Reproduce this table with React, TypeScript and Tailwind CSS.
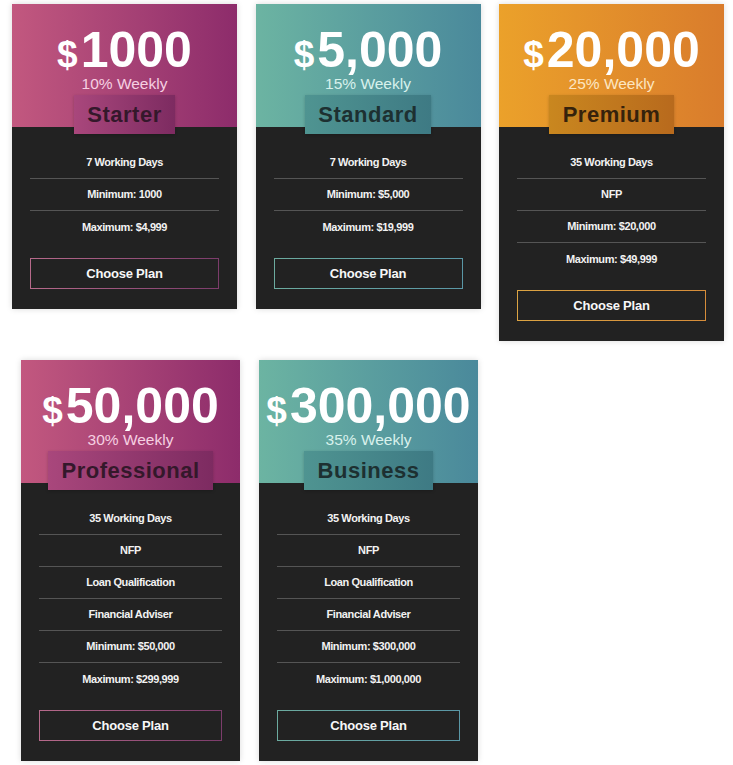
import React from "react";

type Plan = {
  price: string;
  rate: string;
  name: string;
  features: string[];
  theme: "pink" | "teal" | "orange";
};

const themes = {
  pink: {
    header: "bg-gradient-to-r from-[#c2587f] to-[#8d2c6b]",
    label: "bg-gradient-to-r from-[#a9477c] to-[#7d2b61]",
    border: "bg-gradient-to-r from-[#b76a8b] to-[#7c3c6b]",
    rate: "text-[#f6d0e2]",
    ink: "text-[#34182b]",
  },
  teal: {
    header: "bg-gradient-to-r from-[#6cb4a2] to-[#4a899b]",
    label: "bg-gradient-to-r from-[#4f9491] to-[#3e7a84]",
    border: "bg-gradient-to-r from-[#6cab9f] to-[#5a97a6]",
    rate: "text-[#d8f1ec]",
    ink: "text-[#1d3031]",
  },
  orange: {
    header: "bg-gradient-to-r from-[#eba12a] to-[#d97c2c]",
    label: "bg-gradient-to-r from-[#c9871f] to-[#b86a1d]",
    border: "bg-gradient-to-r from-[#dca443] to-[#d68d3a]",
    rate: "text-[#fce6c2]",
    ink: "text-[#35220c]",
  },
};

const topRow: Plan[] = [
  {
    price: "1000",
    rate: "10% Weekly",
    name: "Starter",
    features: ["7 Working Days", "Minimum: 1000", "Maximum: $4,999"],
    theme: "pink",
  },
  {
    price: "5,000",
    rate: "15% Weekly",
    name: "Standard",
    features: ["7 Working Days", "Minimum: $5,000", "Maximum: $19,999"],
    theme: "teal",
  },
  {
    price: "20,000",
    rate: "25% Weekly",
    name: "Premium",
    features: ["35 Working Days", "NFP", "Minimum: $20,000", "Maximum: $49,999"],
    theme: "orange",
  },
];

const bottomRow: Plan[] = [
  {
    price: "50,000",
    rate: "30% Weekly",
    name: "Professional",
    features: [
      "35 Working Days",
      "NFP",
      "Loan Qualification",
      "Financial Adviser",
      "Minimum: $50,000",
      "Maximum: $299,999",
    ],
    theme: "pink",
  },
  {
    price: "300,000",
    rate: "35% Weekly",
    name: "Business",
    features: [
      "35 Working Days",
      "NFP",
      "Loan Qualification",
      "Financial Adviser",
      "Minimum: $300,000",
      "Maximum: $1,000,000",
    ],
    theme: "teal",
  },
];

const PlanCard = ({ plan, width }: { plan: Plan; width: string }) => {
  const t = themes[plan.theme];
  return (
    <div className={`${width} shrink-0 bg-[#222222] shadow-[0_0_6px_rgba(0,0,0,0.15)]`}>
      <div className={`flex h-[123px] flex-col items-center pt-[21px] ${t.header}`}>
        <div className="flex h-[50px] items-baseline font-bold text-white">
          <span className="mr-[3px] text-[37px] leading-[50px]">$</span>
          <span className="text-[50px] leading-[50px]">{plan.price}</span>
        </div>
        <p className={`text-[15.5px] leading-[18px] ${t.rate}`}>{plan.rate}</p>
        <div
          className={`relative z-10 mt-[2px] h-[39px] px-[13.5px] text-[22px] leading-[39px] font-bold tracking-[0.5px] shadow-[0_1px_3px_rgba(0,0,0,0.2)] ${t.label} ${t.ink}`}
        >
          {plan.name}
        </div>
      </div>
      <div className="px-[18px] pt-[20px] pb-[20px]">
        <ul>
          {plan.features.map((f, i) => (
            <li
              key={f}
              className={`flex h-[32px] items-center justify-center text-[11px] font-bold tracking-[-0.4px] text-[#f2f2f2] ${
                i < plan.features.length - 1 ? "border-b border-[#555555]" : ""
              }`}
            >
              {f}
            </li>
          ))}
        </ul>
        <div className={`mt-[15px] p-[1px] ${t.border}`}>
          <button className="flex h-[29px] w-full items-center justify-center bg-[#222222] text-[13px] font-bold tracking-[-0.2px] text-[#f7f7f7]">
            Choose Plan
          </button>
        </div>
      </div>
    </div>
  );
};

const App = () => {
  return (
    <div className="min-h-screen bg-white pt-[4px] font-['Liberation_Sans',Arial,sans-serif]">
      <div className="flex items-start gap-[18.5px] pl-[12px]">
        {topRow.map((p) => (
          <PlanCard key={p.name} plan={p} width="w-[225px]" />
        ))}
      </div>
      <div className="mt-[19px] flex items-start gap-[19px] pl-[21px]">
        {bottomRow.map((p) => (
          <PlanCard key={p.name} plan={p} width="w-[219px]" />
        ))}
      </div>
    </div>
  );
};

export default App;
